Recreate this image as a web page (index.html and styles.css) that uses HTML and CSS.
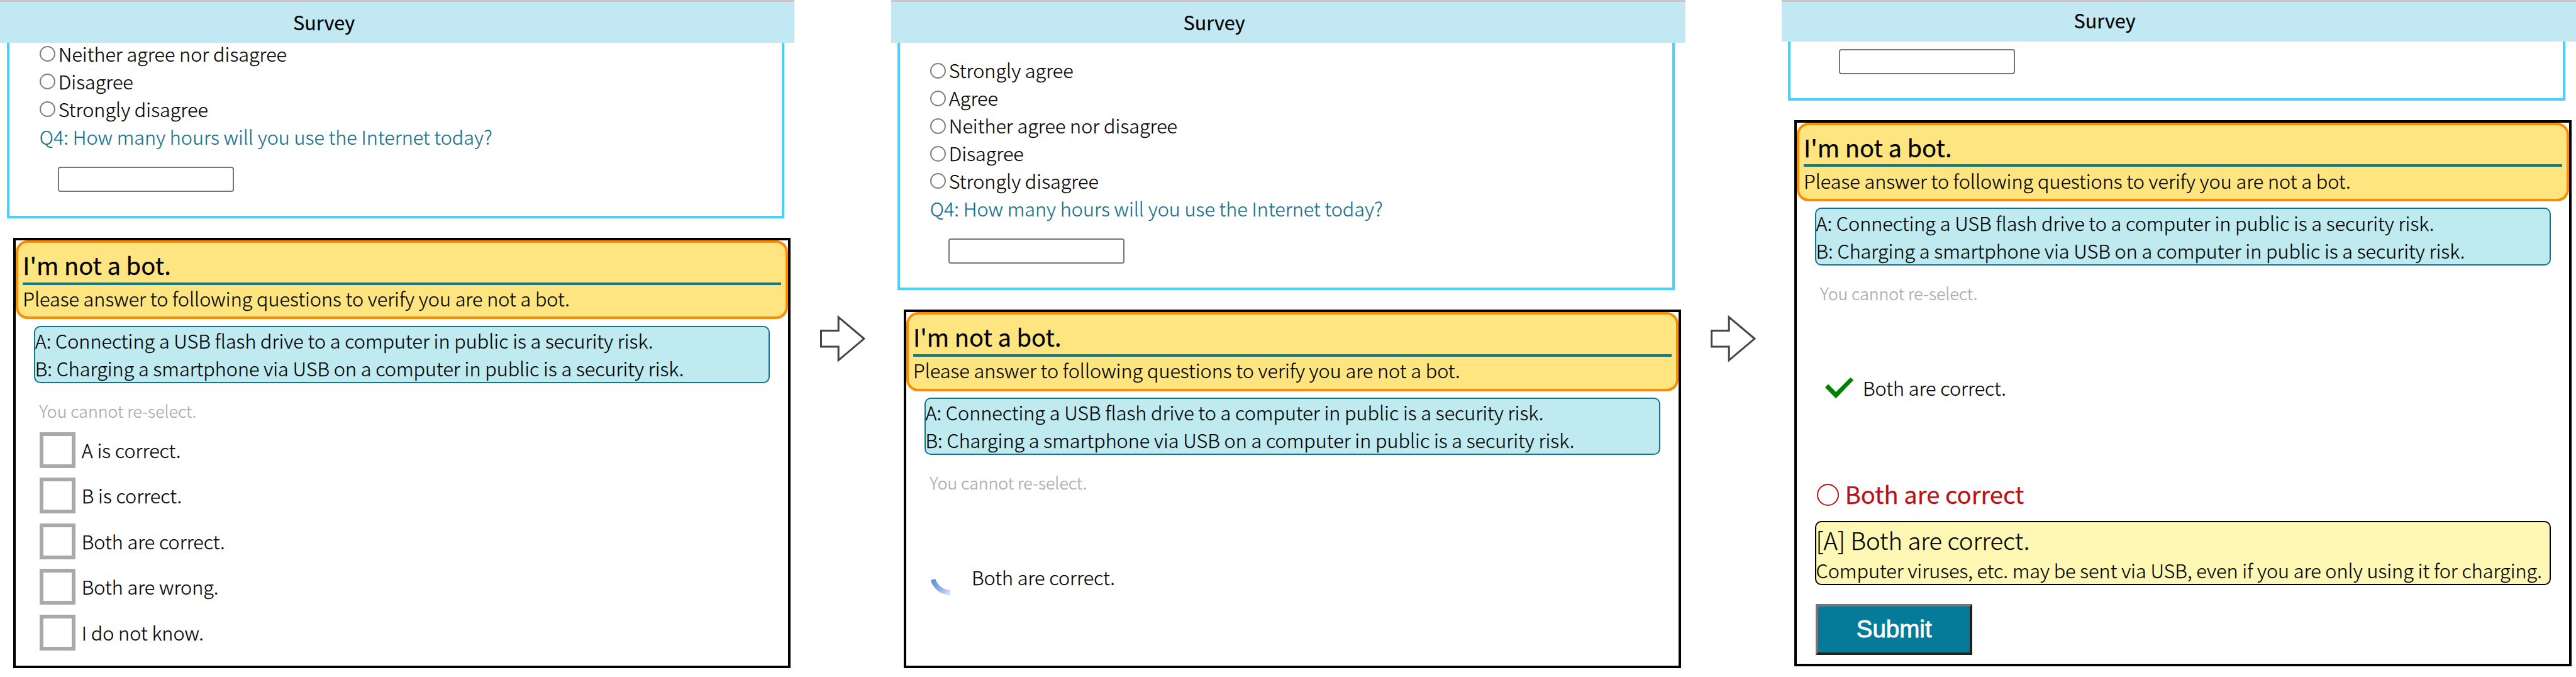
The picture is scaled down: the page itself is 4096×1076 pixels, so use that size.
FILE: index.html
```html
<!DOCTYPE html>
<html lang="en">
<head>
  <meta charset="UTF-8">
  <title>Survey</title>
  <link rel="stylesheet" href="styles.css">
</head>
<body>
  <!-- Step 1: choices -->
  <section class="screen first">
    <header class="title">Survey</header>
    <div class="survey">
      <label class="option"><input type="radio" name="q3a">Neither agree nor disagree</label>
      <label class="option"><input type="radio" name="q3a">Disagree</label>
      <label class="option"><input type="radio" name="q3a">Strongly disagree</label>
      <p class="question">Q4: How many hours will you use the Internet today?</p>
      <input class="hours" type="text">
    </div>
    <div class="captcha">
      <div class="captcha-head">
        <h2>I'm not a bot.</h2>
        <p>Please answer to following questions to verify you are not a bot.</p>
      </div>
      <div class="statements">
        <p>A: Connecting a USB flash drive to a computer in public is a security risk.</p>
        <p>B: Charging a smartphone via USB on a computer in public is a security risk.</p>
      </div>
      <p class="note">You cannot re-select.</p>
      <div class="choices">
        <div class="choice"><span class="box"></span>A is correct.</div>
        <div class="choice"><span class="box"></span>B is correct.</div>
        <div class="choice"><span class="box"></span>Both are correct.</div>
        <div class="choice"><span class="box"></span>Both are wrong.</div>
        <div class="choice"><span class="box"></span>I do not know.</div>
      </div>
    </div>
  </section>

  <svg class="arrow" width="74" height="76" viewBox="0 0 74 76">
    <path d="M1.5 24.5H29.2V3L69.9 37.3L29.2 71.6V50H1.5Z"/>
  </svg>

  <!-- Step 2: checking -->
  <section class="screen second">
    <header class="title">Survey</header>
    <div class="survey">
      <label class="option"><input type="radio" name="q3b">Strongly agree</label>
      <label class="option"><input type="radio" name="q3b">Agree</label>
      <label class="option"><input type="radio" name="q3b">Neither agree nor disagree</label>
      <label class="option"><input type="radio" name="q3b">Disagree</label>
      <label class="option"><input type="radio" name="q3b">Strongly disagree</label>
      <p class="question">Q4: How many hours will you use the Internet today?</p>
      <input class="hours" type="text">
    </div>
    <div class="captcha">
      <div class="captcha-head">
        <h2>I'm not a bot.</h2>
        <p>Please answer to following questions to verify you are not a bot.</p>
      </div>
      <div class="statements">
        <p>A: Connecting a USB flash drive to a computer in public is a security risk.</p>
        <p>B: Charging a smartphone via USB on a computer in public is a security risk.</p>
      </div>
      <p class="note">You cannot re-select.</p>
      <div class="checking">
        <svg class="spinner" width="66" height="66" viewBox="0 0 66 66">
          <defs>
            <linearGradient id="fade" x1="0" y1="0.2" x2="1" y2="1">
              <stop offset="0" stop-color="#6795d8"/>
              <stop offset="0.5" stop-color="#8fb0e2"/>
              <stop offset="1" stop-color="#d3e0f4"/>
            </linearGradient>
          </defs>
          <path d="M4.5 41A29.2 29.2 0 0 0 32 62" fill="none" stroke="url(#fade)" stroke-width="8"/>
        </svg>
        <span>Both are correct.</span>
      </div>
    </div>
  </section>

  <svg class="arrow" width="74" height="76" viewBox="0 0 74 76">
    <path d="M1.5 24.5H29.2V3L69.9 37.3L29.2 71.6V50H1.5Z"/>
  </svg>

  <!-- Step 3: result -->
  <section class="screen third">
    <header class="title">Survey</header>
    <div class="survey">
      <input class="hours" type="text">
    </div>
    <div class="captcha">
      <div class="captcha-head">
        <h2>I'm not a bot.</h2>
        <p>Please answer to following questions to verify you are not a bot.</p>
      </div>
      <div class="statements">
        <p>A: Connecting a USB flash drive to a computer in public is a security risk.</p>
        <p>B: Charging a smartphone via USB on a computer in public is a security risk.</p>
      </div>
      <p class="note">You cannot re-select.</p>
      <div class="checked">
        <svg width="46" height="34" viewBox="0 0 46 34">
          <path d="M40.2 0L45.3 4.1L17.2 33.3L0 15.8L5 10.6L17.2 23Z" fill="#008000"/>
        </svg>
        <span>Both are correct.</span>
      </div>
      <div class="result"><span class="ring"></span>Both are correct</div>
      <div class="answer">
        <p class="answer-title">[A] Both are correct.</p>
        <p>Computer viruses, etc. may be sent via USB, even if you are only using it for charging.</p>
      </div>
      <button class="submit">Submit</button>
    </div>
  </section>
</body>
</html>
```
FILE: styles.css
```css
* {
  box-sizing: border-box;
}
body {
  margin: 0;
  height: 1076px;
  display: flex;
  overflow: hidden;
  background: #fff;
  color: #000;
  font-family: "Noto Sans CJK JP", "Noto Sans", sans-serif;
  font-size: 30.55px;
  font-weight: 300;
  line-height: 43.9px;
  white-space: nowrap;
  -webkit-text-stroke: 0.25px;
}
p, h2 {
  margin: 0;
}
.screen {
  width: 1263px;
  height: 1076px;
  flex: none;
  display: flex;
  flex-direction: column;
  padding-bottom: 14px;
}
.third {
  padding-bottom: 16.6px;
}
.title {
  height: 68.4px;
  flex: none;
  padding: 11px 0 0 466px;
  border-top: 3px solid #c8c8cb;
  background: #c2e8f3;
  font-weight: 400;
}
.second .title, .third .title {
  padding-left: 464.5px;
}
.third .title {
  height: 65.7px;
  padding-top: 8.4px;
}

/* survey */
.survey {
  width: 1235.5px;
  margin-left: 11.3px;
  padding: 0 0 38px 47.5px;
  border: 4px solid #45d4fb;
  border-top: none;
}
.second .survey, .third .survey {
  margin-left: 10.3px;
}
.second .survey {
  padding-top: 22px;
}
.option {
  display: flex;
  align-items: center;
}
.first .option:first-child {
  margin-top: -4.4px;
}
.option input {
  appearance: none;
  width: 25px;
  height: 25px;
  margin: 0 5px 0 0;
  border: 2px solid #808080;
  border-radius: 50%;
  background: #fff;
}
.question {
  color: #136f8e;
}
.hours {
  display: block;
  width: 280px;
  height: 40px;
  margin: 25.2px 0 0 29px;
  border: 2px solid #767676;
  border-radius: 4px;
  background: #fff;
}
.third .hours {
  margin-top: 12px;
}

/* captcha */
.captcha {
  flex: 1;
  width: 1235.5px;
  margin: 31px 0 0 21.2px;
  border: 4px solid #000;
}
.second .captcha, .third .captcha {
  margin-left: 20px;
}
.captcha-head {
  height: 125.5px;
  padding: 7.4px 7px 0;
  border: 4px solid #ff8b00;
  border-radius: 19px;
  background: #fee580;
}
.captcha-head h2 {
  height: 59.4px;
  border-bottom: 4px solid #067b95;
  font-size: 38.2px;
  font-weight: 400;
  line-height: 55.4px;
}
.captcha-head p {
  padding-top: 0.6px;
}
.statements {
  height: 91.2px;
  margin: 10.3px 28.5px 0;
  padding-top: 0.5px;
  border: 2px solid #0f7391;
  border-radius: 10px;
  background: #beeaf0;
}
.note {
  margin: 24px 0 0 37.3px;
  color: #a9a9a9;
  font-size: 26.7px;
  line-height: 39.5px;
}
.choices {
  display: flex;
  flex-direction: column;
  gap: 15.5px;
  margin: 14.7px 0 0 37.5px;
}
.choice {
  height: 57px;
  display: flex;
  align-items: center;
  gap: 9.6px;
  line-height: 45.5px;
}
.box {
  width: 57.4px;
  height: 57px;
  border: 6px solid #a9a9a9;
}
.checking {
  height: 66px;
  display: flex;
  align-items: center;
  margin: 93.5px 0 0 38px;
}
.checking span {
  padding-top: 10px;
}
.checked {
  display: flex;
  align-items: center;
  gap: 14px;
  margin: 109.7px 0 0 45px;
}
.result {
  display: flex;
  align-items: center;
  gap: 10px;
  margin: 117.6px 0 0 31.7px;
  color: #b71318;
  font-size: 38.2px;
  font-weight: 400;
  line-height: 57px;
}
.ring {
  width: 35px;
  height: 35px;
  margin-top: 3px;
  border: 2px solid #b71318;
  border-radius: 50%;
}
.answer {
  height: 102.5px;
  margin: 14.6px 28.5px 0;
  border: 2px solid #000;
  border-radius: 10px;
  background: #fef8b4;
}
.answer-title {
  font-size: 38.2px;
  line-height: 55px;
}
.submit {
  display: block;
  width: 248.6px;
  height: 81px;
  margin: 29.2px 0 0 30.4px;
  padding: 0;
  border: 4px solid;
  border-color: #767676 #202020 #202020 #767676;
  background: #067b99;
  color: #fff;
  font-family: "Liberation Sans", Arial, sans-serif;
  font-size: 38.5px;
  -webkit-text-stroke: 0.8px #fff;
}

/* arrows between the screens */
.arrow {
  flex: none;
  margin: 500.5px 39px 0 41px;
}
.arrow path {
  fill: #fff;
  stroke: #444;
  stroke-width: 3;
}
.second + .arrow {
  margin-left: 40px;
}
```
